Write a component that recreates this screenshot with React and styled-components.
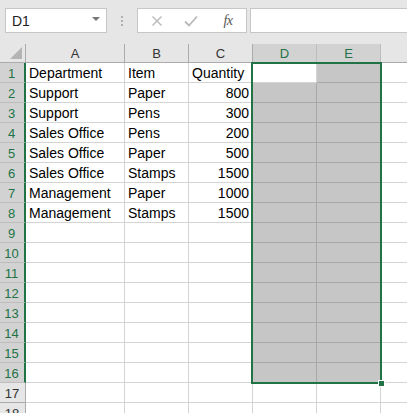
import React from 'react'
import styled, { createGlobalStyle } from 'styled-components'

const GlobalStyle = createGlobalStyle`
  html, body {
    margin: 0;
    padding: 0;
    background: #e6e6e6;
    overflow: hidden;
  }
  * { box-sizing: border-box; }
`

const GREEN = '#217346'

const Page = styled.div`
  width: 407px;
  height: 413px;
  overflow: hidden;
  background: #e6e6e6;
  font-family: "Liberation Sans", Arial, sans-serif;
`

const FormulaBar = styled.div`
  height: 44px;
  display: flex;
  align-items: flex-start;
  padding: 8px 0 0 5px;
`

const NameBox = styled.div`
  width: 102px;
  height: 25px;
  background: #fff;
  border: 1px solid #c6c6c6;
  display: flex;
  align-items: center;
  justify-content: space-between;
  padding: 0 6px;
  font-size: 14px;
  color: #222;
`

const Caret = styled.span`
  width: 0;
  height: 0;
  border-left: 4px solid transparent;
  border-right: 4px solid transparent;
  border-top: 4px solid #777;
  margin-top: -3px;
`

const Dots = styled.div`
  width: 30px;
  height: 25px;
  display: flex;
  flex-direction: column;
  align-items: center;
  justify-content: center;
  gap: 2px;
  span {
    width: 2px;
    height: 2px;
    background: #b0b0b0;
  }
`

const ButtonBox = styled.div`
  width: 110px;
  height: 25px;
  background: #fff;
  border: 1px solid #c6c6c6;
  display: flex;
  align-items: center;
  padding-left: 12px;
`

const Btn = styled.div`
  width: ${p => p.w}px;
  display: flex;
  align-items: center;
  justify-content: center;
`

const Fx = styled.span`
  font-family: "Liberation Serif", "Times New Roman", serif;
  font-style: italic;
  font-size: 14px;
  color: #555;
  letter-spacing: -0.5px;
`

const FormulaInput = styled.div`
  flex: 1;
  height: 25px;
  margin-left: 3px;
  background: #fff;
  border: 1px solid #c6c6c6;
  border-right: none;
`

const SheetWrap = styled.div`
  position: relative;
`

const Grid = styled.div`
  display: grid;
  grid-template-columns: 26px 99px 64px 64px 64px 64px 64px;
  grid-template-rows: 19px;
  grid-auto-rows: 20px;
  background: #fff;
`

const Corner = styled.div`
  background: #e6e6e6;
  border-right: 1px solid #ababab;
  border-bottom: 1px solid #ababab;
  position: relative;
  &::after {
    content: '';
    position: absolute;
    right: 3px;
    bottom: 3px;
    width: 0;
    height: 0;
    border-left: 12px solid transparent;
    border-bottom: 12px solid #b4b4b4;
  }
`

const ColHead = styled.div`
  background: ${p => (p.sel ? '#d2d2d2' : '#e6e6e6')};
  color: ${p => (p.sel ? GREEN : '#333')};
  border-right: 1px solid ${p => (p.sel ? '#bdbdbd' : '#ababab')};
  border-bottom: 1px solid #ababab;
  font-size: 13px;
  display: flex;
  align-items: center;
  justify-content: center;
  padding-top: 1px;
`

const RowHead = styled.div`
  background: ${p => (p.sel ? '#d2d2d2' : '#e6e6e6')};
  color: ${p => (p.sel ? GREEN : '#333')};
  border-right: ${p => (p.sel ? `2px solid ${GREEN}` : '1px solid #ababab')};
  border-bottom: 1px solid ${p => (p.sel ? '#bdbdbd' : '#ababab')};
  font-size: 13px;
  display: flex;
  align-items: center;
  justify-content: center;
  padding: 1px 1px 0 0;
`

const Cell = styled.div`
  background: ${p => (p.sel ? '#c6c6c6' : '#fff')};
  border-right: 1px solid ${p => (p.sel ? '#a8a8a8' : '#d4d4d4')};
  border-bottom: 1px solid ${p => (p.sel ? '#a8a8a8' : '#d4d4d4')};
  font-size: 14px;
  color: #000;
  display: flex;
  align-items: center;
  justify-content: ${p => (p.num ? 'flex-end' : 'flex-start')};
  padding: 1px 3px 0 3px;
  white-space: nowrap;
  overflow: hidden;
`

const Selection = styled.div`
  position: absolute;
  left: 251px;
  top: 18px;
  width: 131px;
  height: 322px;
  border: 2px solid ${GREEN};
  pointer-events: none;
`

const Handle = styled.div`
  position: absolute;
  right: -5px;
  bottom: -5px;
  width: 7px;
  height: 7px;
  background: ${GREEN};
  border: 1px solid #fff;
`

const data = [
  ['Department', 'Item', 'Quantity'],
  ['Support', 'Paper', 800],
  ['Support', 'Pens', 300],
  ['Sales Office', 'Pens', 200],
  ['Sales Office', 'Paper', 500],
  ['Sales Office', 'Stamps', 1500],
  ['Management', 'Paper', 1000],
  ['Management', 'Stamps', 1500],
]

const cols = ['A', 'B', 'C', 'D', 'E', '']

const Toolbar = () => (
  <FormulaBar>
    <NameBox>
      <span>D1</span>
      <Caret />
    </NameBox>
    <Dots>
      <span />
      <span />
      <span />
    </Dots>
    <ButtonBox>
      <Btn w={14}>
        <svg width="12" height="12" viewBox="0 0 12 12">
          <path d="M1.5 1.5 L10.5 10.5 M10.5 1.5 L1.5 10.5" stroke="#b9b9b9" strokeWidth="1.4" fill="none" />
        </svg>
      </Btn>
      <Btn w={54}>
        <svg width="14" height="12" viewBox="0 0 14 12">
          <path d="M1 6.5 L5 10.5 L13 1.5" stroke="#b9b9b9" strokeWidth="1.8" fill="none" />
        </svg>
      </Btn>
      <Btn w={20}>
        <Fx>fx</Fx>
      </Btn>
    </ButtonBox>
    <FormulaInput />
  </FormulaBar>
)

const Sheet = () => {
  const rows = Array.from({ length: 18 }, (_, i) => i + 1)
  return (
    <SheetWrap>
      <Grid>
        <Corner />
        {cols.map((c, i) => (
          <ColHead key={i} sel={c === 'D' || c === 'E'}>{c}</ColHead>
        ))}
        {rows.map(r => {
          const d = data[r - 1] || []
          const inSel = r <= 16
          return (
            <React.Fragment key={r}>
              <RowHead sel={inSel}>{r}</RowHead>
              <Cell>{d[0]}</Cell>
              <Cell>{d[1]}</Cell>
              <Cell num={typeof d[2] === 'number'}>{d[2]}</Cell>
              <Cell sel={inSel && r !== 1} />
              <Cell sel={inSel} />
              <Cell />
            </React.Fragment>
          )
        })}
      </Grid>
      <Selection>
        <Handle />
      </Selection>
    </SheetWrap>
  )
}

const App = () => (
  <Page>
    <GlobalStyle />
    <Toolbar />
    <Sheet />
  </Page>
)

export default App
